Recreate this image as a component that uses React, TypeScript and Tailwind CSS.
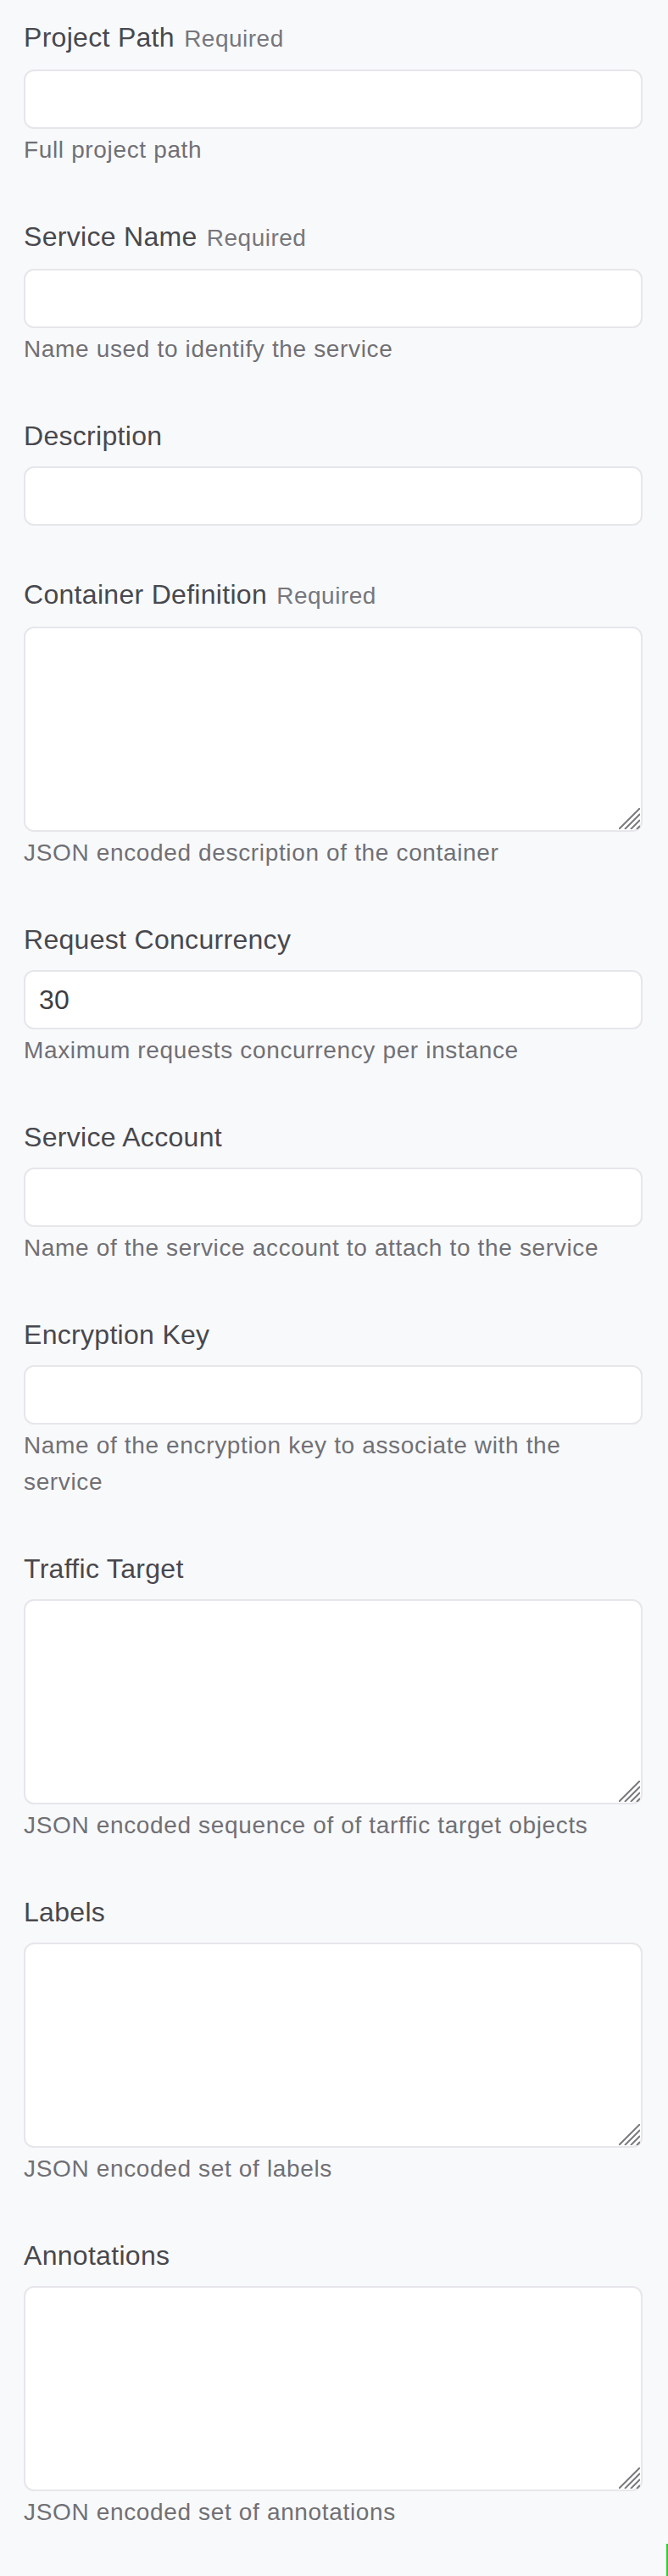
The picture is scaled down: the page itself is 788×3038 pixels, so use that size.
import React from "react";

type Field = {
  label: string;
  required?: boolean;
  help?: string;
  multiline?: boolean;
  value?: string;
};

const fields: Field[] = [
  { label: "Project Path", required: true, help: "Full project path" },
  { label: "Service Name", required: true, help: "Name used to identify the service" },
  { label: "Description" },
  {
    label: "Container Definition",
    required: true,
    help: "JSON encoded description of the container",
    multiline: true,
  },
  { label: "Request Concurrency", help: "Maximum requests concurrency per instance", value: "30" },
  { label: "Service Account", help: "Name of the service account to attach to the service" },
  { label: "Encryption Key", help: "Name of the encryption key to associate with the service" },
  {
    label: "Traffic Target",
    help: "JSON encoded sequence of of tarffic target objects",
    multiline: true,
  },
  { label: "Labels", help: "JSON encoded set of labels", multiline: true },
  { label: "Annotations", help: "JSON encoded set of annotations", multiline: true },
];

const ResizeGrip = () => (
  <svg
    className="absolute right-[3px] bottom-[3px] pointer-events-none"
    width="25"
    height="25"
    viewBox="0 0 25 25"
    fill="none"
    stroke="#7a7a7e"
    strokeWidth="2"
  >
    <path d="M25 0L0 25M25 7L7 25M25 14L14 25M25 21L21 25" />
  </svg>
);

const FormField = ({ field }: { field: Field }) => (
  <div className="mb-[57px]">
    <label className="block mb-[12px] text-[32px] leading-[48px] tracking-[0.3px] text-[#48484d]">
      {field.label}
      {field.required && (
        <>
          {" "}
          <span className="ml-[2px] text-[28px] tracking-[0.5px] text-[#77777c]">Required</span>
        </>
      )}
    </label>
    {field.multiline ? (
      <div className="relative">
        <textarea
          className="block w-full h-[242px] resize-none rounded-[12px] border-2 border-[#e6e6eb] bg-white px-[16px] py-[12px] text-[32px] text-[#3d3d42] outline-none"
          defaultValue={field.value}
        />
        <ResizeGrip />
      </div>
    ) : (
      <input
        type="text"
        className="block w-full h-[70px] rounded-[12px] border-2 border-[#e6e6eb] bg-white px-[16px] text-[32px] tracking-[0.3px] text-[#3d3d42] outline-none"
        defaultValue={field.value}
      />
    )}
    {field.help && (
      <p className="mt-[3px] text-[28px] leading-[43px] tracking-[0.65px] text-[#707075] pr-[40px]">
        {field.help}
      </p>
    )}
  </div>
);

export default function App() {
  return (
    <div className="relative min-h-[3038px] bg-[#f8f9fb] pt-[20px] pl-[28px] pr-[30px] font-['Liberation_Sans',Arial,sans-serif]">
      {fields.map((f) => (
        <FormField key={f.label} field={f} />
      ))}
      <div className="absolute right-0 bottom-0 w-[2px] h-[38px] bg-[#33cc33]" />
    </div>
  );
}
